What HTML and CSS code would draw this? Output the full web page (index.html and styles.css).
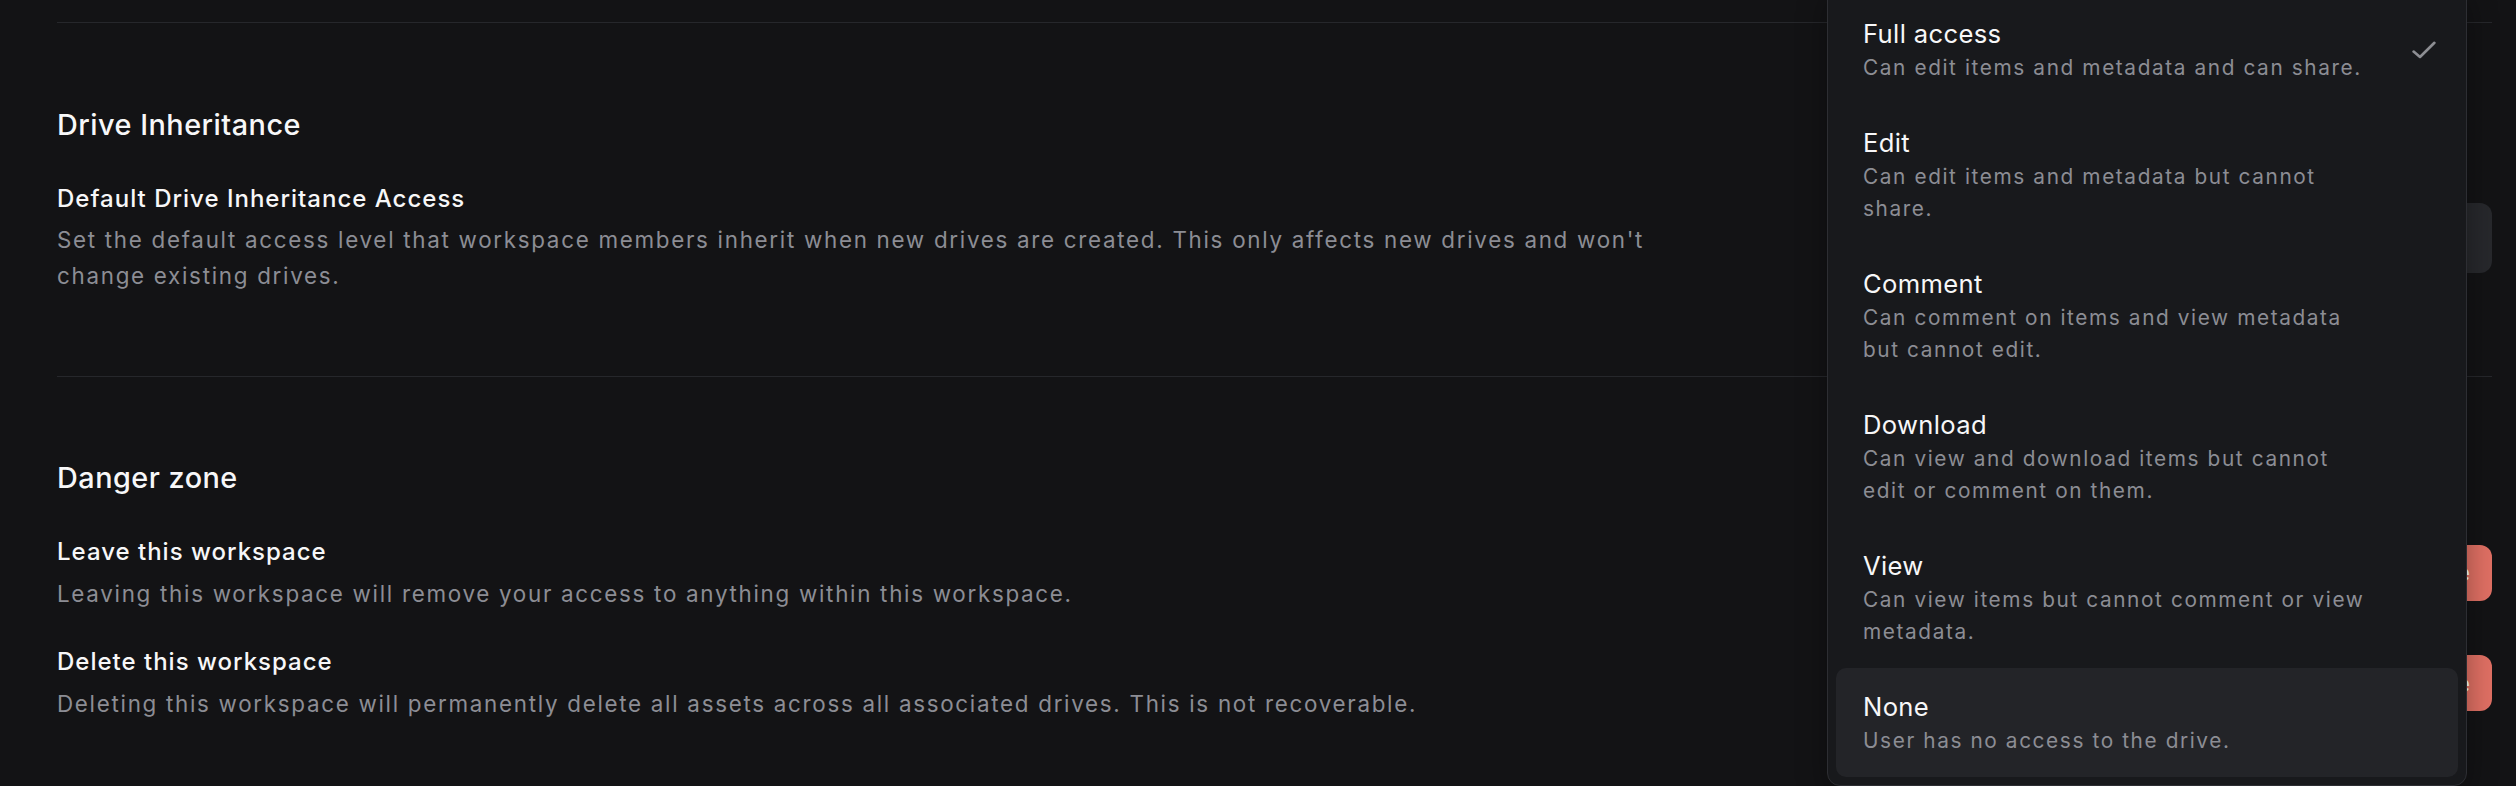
FILE: index.html
```html
<!DOCTYPE html>
<html lang="en">
<head>
<meta charset="utf-8">
<title>Workspace settings</title>
<link rel="stylesheet" href="styles.css">
</head>
<body>
<main class="page">
  <hr class="divider">
  <section class="section section-first">
    <h2 class="heading">Drive Inheritance</h2>
    <div class="row">
      <div class="info">
        <div class="label">Default Drive Inheritance Access</div>
        <p class="desc">Set the default access level that workspace members inherit when new drives are created. This only affects new drives and won't change existing drives.</p>
      </div>
      <button class="select">Full access
        <svg class="chev" width="20" height="20" viewBox="0 0 24 24" fill="none" stroke="currentColor" stroke-width="2" stroke-linecap="round" stroke-linejoin="round"><path d="m6 9 6 6 6-6"/></svg>
      </button>
    </div>
  </section>
  <hr class="divider">
  <section class="section section-second">
    <h2 class="heading">Danger zone</h2>
    <div class="rows">
      <div class="row">
        <div class="info">
          <div class="label">Leave this workspace</div>
          <p class="desc">Leaving this workspace will remove your access to anything within this workspace.</p>
        </div>
        <button class="danger">Leave</button>
      </div>
      <div class="row">
        <div class="info">
          <div class="label">Delete this workspace</div>
          <p class="desc">Deleting this workspace will permanently delete all assets across all associated drives. This is not recoverable.</p>
        </div>
        <button class="danger">Delete</button>
      </div>
    </div>
  </section>
</main>

<div class="menu" role="listbox">
  <div class="item" role="option" aria-selected="true">
    <div class="item-text">
      <div class="item-title">Full access</div>
      <div class="item-desc">Can edit items and metadata and can share.</div>
    </div>
    <svg class="check" width="24" height="18" viewBox="0 0 24 18" fill="none" stroke="currentColor" stroke-width="2.6" stroke-linecap="round" stroke-linejoin="round"><polyline points="1.6,10.6 8,16 22.4,1.8"/></svg>
  </div>
  <div class="item" role="option">
    <div class="item-text">
      <div class="item-title">Edit</div>
      <div class="item-desc">Can edit items and metadata but cannot share.</div>
    </div>
  </div>
  <div class="item" role="option">
    <div class="item-text">
      <div class="item-title">Comment</div>
      <div class="item-desc">Can comment on items and view metadata but cannot edit.</div>
    </div>
  </div>
  <div class="item" role="option">
    <div class="item-text">
      <div class="item-title">Download</div>
      <div class="item-desc">Can view and download items but cannot edit or comment on them.</div>
    </div>
  </div>
  <div class="item" role="option">
    <div class="item-text">
      <div class="item-title">View</div>
      <div class="item-desc">Can view items but cannot comment or view metadata.</div>
    </div>
  </div>
  <div class="item item-hover" role="option">
    <div class="item-text">
      <div class="item-title">None</div>
      <div class="item-desc">User has no access to the drive.</div>
    </div>
  </div>
</div>
</body>
</html>
```

FILE: styles.css
```css
* { box-sizing: border-box; }

html, body {
  margin: 0;
  height: 100%;
  overflow: hidden;
}

body {
  background: #131315;
  font-family: Inter, "Noto Sans", "Liberation Sans", sans-serif;
  color: #f5f5f6;
  position: relative;
}

.page {
  padding: 22px 24px 0 57px;
}

.divider {
  margin: 0;
  border: 0;
  height: 1px;
  background: #26272b;
}

.section-first {
  padding: 80px 0 82px;
}

.section-second {
  padding: 79px 0 0;
}

.heading {
  margin: 0 0 33px;
  font-size: 28.8px;
  line-height: 44.8px;
  font-weight: 500;
  letter-spacing: 0.5px;
  color: #f7f7f8;
}

.rows {
  display: flex;
  flex-direction: column;
  gap: 32.6px;
}

.row {
  display: flex;
  align-items: center;
  justify-content: space-between;
}

.info {
  max-width: 1664px;
}

.label {
  font-size: 24px;
  line-height: 36px;
  font-weight: 500;
  letter-spacing: 1px;
  color: #f7f7f8;
}

.desc {
  margin: 5.6px 0 0;
  font-size: 22.4px;
  line-height: 36px;
  letter-spacing: 1.7px;
  color: #8c8d94;
}

.select {
  height: 70px;
  padding: 0 22px;
  border: 0;
  border-radius: 12px;
  background: #27282c;
  color: #f5f5f6;
  font: 500 22.4px Inter, sans-serif;
  display: flex;
  align-items: center;
  gap: 10px;
}

.chev { color: #8c8d94; }

.danger {
  height: 56px;
  padding: 0 22px;
  border: 0;
  border-radius: 12px;
  background: #e07064;
  color: #ffffff;
  font: 500 22.4px Inter, sans-serif;
}

.menu {
  position: absolute;
  left: 1827px;
  top: -14px;
  width: 640px;
  padding: 8px;
  background: #18191c;
  border: 1px solid #2d2e33;
  border-radius: 13px;
  box-shadow: 0 10px 30px rgba(0, 0, 0, 0.35);
}

.item {
  display: flex;
  align-items: center;
  padding: 20.5px 22px 20.5px 27px;
  border-radius: 10px;
}

.item-hover {
  background: #232428;
}

.item-text {
  width: 506px;
}

.item-title {
  font-size: 25.6px;
  line-height: 36px;
  letter-spacing: 0.35px;
  color: #f7f7f8;
}

.item-desc {
  font-size: 20.8px;
  line-height: 32px;
  letter-spacing: 1.6px;
  color: #8c8d94;
}

.check {
  margin-left: auto;
  color: #8d8e93;
  flex: none;
}
```
